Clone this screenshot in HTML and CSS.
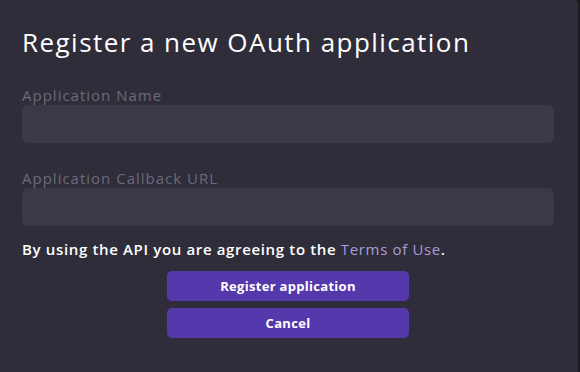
FILE: index.html
```html
<!DOCTYPE html>
<html lang="en">

<head>
  <meta charset="UTF-8" />
  <meta name="viewport" content="width=device-width, initial-scale=1.0" />
  <title>Register OAuth application</title>
  <link rel="stylesheet" href="styles.css">
</head>

<body>
  <div class="modal">
    <form class="oauth-form" id="oauthForm">
      <h1>Register a new OAuth application</h1>

      <label class="field">
        <span class="field-label">Application Name</span>
        <input type="text" name="name" />
      </label>

      <label class="field">
        <span class="field-label">Application Callback URL</span>
        <input type="url" name="callback" />
      </label>

      <p class="terms">By using the API you are agreeing to the <a href="#">Terms of Use</a>.</p>

      <div class="actions">
        <button type="submit">Register application</button>
        <button type="button" id="cancel">Cancel</button>
      </div>
    </form>
  </div>
</body>

</html>
```

FILE: styles.css
```css
* {
  box-sizing: border-box;
}

body {
  margin: 0;
  height: 100vh;
  background: #1c1b21;
  font-family: 'Open Sans', sans-serif;
  color: #ffffff;
}

.modal {
  width: 578px;
  height: 100%;
  background: #2f2d39;
  border-top-right-radius: 4px;
}

.oauth-form {
  display: flex;
  flex-direction: column;
  padding: 26px 24px 0 22px;
}

h1 {
  margin: 0 0 28px;
  font-size: 26px;
  font-weight: 400;
  line-height: 32px;
  letter-spacing: 1.45px;
}

.field {
  display: flex;
  flex-direction: column;
  margin-bottom: 26px;
}

.field-label {
  color: #6d6a7a;
  font-size: 15px;
  line-height: 18px;
  letter-spacing: 1px;
  margin-bottom: 1px;
}

input {
  height: 38px;
  background: #3c3947;
  border: none;
  border-radius: 6px;
  padding: 0 12px;
  color: #eee;
  font: inherit;
}

.terms {
  margin: -13px 0 12px;
  font-size: 15px;
  font-weight: 600;
  line-height: 20px;
  letter-spacing: 0.65px;
}

.terms a {
  color: #a99bd8;
  font-weight: 400;
  text-decoration: none;
}

.actions {
  display: flex;
  flex-direction: column;
  align-items: center;
  gap: 7px;
}

button {
  width: 242px;
  height: 30px;
  border: none;
  border-radius: 5px;
  background: #5638ad;
  color: #ffffff;
  font-family: inherit;
  font-size: 13px;
  font-weight: 700;
  letter-spacing: 0.3px;
  cursor: pointer;
}
```
